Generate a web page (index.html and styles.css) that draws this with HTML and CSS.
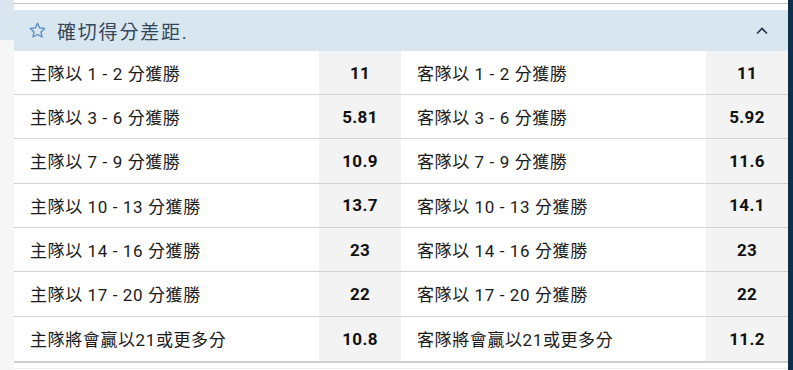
FILE: index.html
```html
<!DOCTYPE html>
<html lang="zh-Hant">
<head>
<meta charset="utf-8">
<link rel="stylesheet" href="styles.css">
</head>
<body>
<div class="page">
  <div class="side"></div>
  <div class="main">
    <div class="topline"></div>
    <div class="market">
      <div class="header">
        <svg class="star" width="19" height="19" viewBox="0 0 24 24"><path d="M12 2.8l2.75 5.9 6.45.75-4.8 4.4 1.3 6.4L12 17.05 6.3 20.25l1.3-6.4-4.8-4.4 6.45-.75z" fill="none" stroke="#5a8cc6" stroke-width="1.7" stroke-linejoin="round"/></svg>
        <span class="title">確切得分差距.</span>
        <svg class="chev" width="14" height="10" viewBox="0 0 14 10"><path d="M2 7.5L7 2.5l5 5" fill="none" stroke="#1e2f4a" stroke-width="1.6"/></svg>
      </div>
      <div class="grid">
        <div class="row"><div class="cell"><span class="label">主隊以 1 - 2 分獲勝</span><span class="odds">11</span></div><div class="cell"><span class="label">客隊以 1 - 2 分獲勝</span><span class="odds">11</span></div></div>
        <div class="row"><div class="cell"><span class="label">主隊以 3 - 6 分獲勝</span><span class="odds">5.81</span></div><div class="cell"><span class="label">客隊以 3 - 6 分獲勝</span><span class="odds">5.92</span></div></div>
        <div class="row"><div class="cell"><span class="label">主隊以 7 - 9 分獲勝</span><span class="odds">10.9</span></div><div class="cell"><span class="label">客隊以 7 - 9 分獲勝</span><span class="odds">11.6</span></div></div>
        <div class="row"><div class="cell"><span class="label">主隊以 10 - 13 分獲勝</span><span class="odds">13.7</span></div><div class="cell"><span class="label">客隊以 10 - 13 分獲勝</span><span class="odds">14.1</span></div></div>
        <div class="row"><div class="cell"><span class="label">主隊以 14 - 16 分獲勝</span><span class="odds">23</span></div><div class="cell"><span class="label">客隊以 14 - 16 分獲勝</span><span class="odds">23</span></div></div>
        <div class="row"><div class="cell"><span class="label">主隊以 17 - 20 分獲勝</span><span class="odds">22</span></div><div class="cell"><span class="label">客隊以 17 - 20 分獲勝</span><span class="odds">22</span></div></div>
        <div class="row last"><div class="cell"><span class="label">主隊將會贏以21或更多分</span><span class="odds">10.8</span></div><div class="cell"><span class="label">客隊將會贏以21或更多分</span><span class="odds">11.2</span></div></div>
      </div>
    </div>
    <div class="after"></div>
  </div>
  <div class="scroll"></div>
</div>
</body>
</html>
```
FILE: styles.css
```css
* { box-sizing: border-box; }
html, body { margin: 0; padding: 0; background: #fff; }
body {
  font-family: "Roboto", "Noto Sans CJK TC", "Noto Sans", sans-serif;
  color: #1a1a1a;
  width: 793px;
  height: 370px;
  overflow: hidden;
}
.page { display: flex; height: 370px; }
.side {
  width: 14px;
  flex: none;
  background: linear-gradient(#d9e6f0 0 40px, #f6f6f6 40px);
}
.main { flex: 1; display: flex; flex-direction: column; }
.topline {
  height: 10px;
  border-top: 3px solid #fff;
}
.topline::before {
  content: "";
  display: block;
  height: 1px;
  background: #c4c4c4;
}
.header {
  height: 41px;
  background: #d8e6f0;
  display: flex;
  align-items: center;
  padding: 0 19px 0 14px;
}
.star { flex: none; }
.title {
  margin-left: 10px;
  font-size: 19px;
  letter-spacing: 1.8px;
  color: #34465a;
  flex: 1;
}
.chev { flex: none; }
.row {
  display: grid;
  grid-template-columns: 1fr 1fr;
  height: 44.34px;
  border-bottom: 1px solid #d4d4d4;
}
.row:first-child { height: 44px; }
.row.last { border-bottom: 2px solid #cfcfcf; height: 46px; }
.cell {
  display: flex;
  align-items: center;
}
.label {
  flex: 1;
  padding-left: 16px;
  font-size: 17px;
  letter-spacing: 0.6px;
  color: #1a1a1a;
}
.odds {
  width: 82px;
  align-self: stretch;
  background: #f3f3f3;
  display: flex;
  align-items: center;
  justify-content: center;
  font-weight: 700;
  font-size: 17px;
  letter-spacing: 0.3px;
  color: #111;
}
.after {
  flex: 1;
  border-bottom: 1px solid #eeeeee;
  margin-bottom: 1px;
}
.scroll {
  width: 5px;
  flex: none;
  background: #0f2e4b;
}
```
